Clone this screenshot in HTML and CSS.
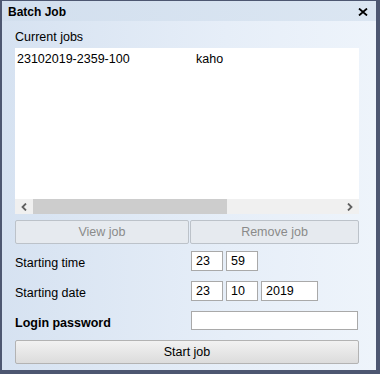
FILE: index.html
```html
<!DOCTYPE html>
<html lang="en">
<head>
    <meta charset="UTF-8">
    <title>Batch Job</title>
    <link rel="stylesheet" href="styles.css">
</head>
<body>
    <div class="window">
        <div class="title-bar">
            <span class="title">Batch Job</span>
            <svg class="close" width="10" height="8" viewBox="0 0 10 8">
                <path d="M1 0.5 L9 7.5 M9 0.5 L1 7.5" stroke="#000" stroke-width="1.8" fill="none"/>
            </svg>
        </div>

        <div class="content">
            <p class="section-label">Current jobs</p>

            <div class="job-list">
                <div class="rows">
                    <div class="row">
                        <span class="job-id">23102019-2359-100</span>
                        <span class="job-user">kaho</span>
                    </div>
                </div>
                <div class="scrollbar">
                    <svg class="arrow" width="6" height="8" viewBox="0 0 6 8">
                        <path d="M5 0.5 L1.5 4 L5 7.5" stroke="#606060" stroke-width="1.8" fill="none"/>
                    </svg>
                    <div class="track"><div class="thumb"></div></div>
                    <svg class="arrow" width="6" height="8" viewBox="0 0 6 8">
                        <path d="M1 0.5 L4.5 4 L1 7.5" stroke="#606060" stroke-width="1.8" fill="none"/>
                    </svg>
                </div>
            </div>

            <div class="job-buttons">
                <button class="btn btn-disabled view">View job</button>
                <button class="btn btn-disabled remove">Remove job</button>
            </div>

            <div class="form">
                <label class="form-label">Starting time</label>
                <div class="fields">
                    <input class="field small" type="text" value="23">
                    <input class="field small" type="text" value="59">
                </div>

                <label class="form-label">Starting date</label>
                <div class="fields">
                    <input class="field small" type="text" value="23">
                    <input class="field small" type="text" value="10">
                    <input class="field year" type="text" value="2019">
                </div>

                <label class="form-label bold">Login password</label>
                <div class="fields">
                    <input class="field password" type="password">
                </div>
            </div>

            <button class="btn btn-start">Start job</button>
        </div>
    </div>
</body>
</html>
```

FILE: styles.css
```css
/* General */
body {
    margin: 0;
    padding: 0;
    background: #4d5771;
    font-family: 'Liberation Sans', Arial, sans-serif;
    font-size: 12.5px;
    color: #000;
}

/* Window frame */
.window {
    margin: 1px 4px 0 2px;
    height: 369px;
    background: linear-gradient(to right, #d6e2f1, #e6eef8 60%, #eef4fb);
    display: flex;
    flex-direction: column;
}

/* Title bar */
.title-bar {
    height: 19px;
    display: flex;
    align-items: center;
    justify-content: space-between;
    padding: 1px 8px 0 6px;
    background: linear-gradient(to right, #d2dfee, #dbe6f2);
}

.title {
    font-weight: bold;
    font-size: 12px;
}

.close {
    display: block;
}

/* Content */
.content {
    padding: 0 17px 0 13px;
    display: flex;
    flex-direction: column;
}

.section-label {
    margin: 8px 0 0 0;
    height: 19px;
    line-height: 16px;
}

/* Job list */
.job-list {
    height: 166px;
    background: #fff;
    display: flex;
    flex-direction: column;
}

.rows {
    flex: 1;
    padding: 4px 2px;
}

.row {
    display: flex;
    line-height: 14px;
}

.job-id {
    width: 179px;
}

.scrollbar {
    height: 15px;
    background: #f0f0f0;
    display: flex;
    align-items: center;
}

.scrollbar .arrow {
    display: block;
    width: 6px;
    margin: 0 6px;
}

.track {
    flex: 1;
    height: 15px;
}

.thumb {
    width: 194px;
    height: 15px;
    background: #cdcdcd;
}

/* Buttons */
.job-buttons {
    margin-top: 6px;
    display: flex;
    gap: 1px;
}

.btn {
    font-family: inherit;
    font-size: 12.5px;
    height: 24px;
    border-radius: 2px;
    padding: 0;
}

.btn-disabled {
    background: #e6eaef;
    border: 1px solid #bcc2c9;
    color: #8a8a8a;
}

.view {
    width: 174px;
}

.remove {
    flex: 1;
}

/* Form */
.form {
    margin-top: 7px;
    display: grid;
    grid-template-columns: 176px 1fr;
    grid-auto-rows: 20px;
    row-gap: 10px;
}

.form-label {
    line-height: 24px;
}

.bold {
    font-weight: bold;
}

.fields {
    display: flex;
    gap: 3px;
}

.field {
    box-sizing: border-box;
    height: 20px;
    margin: 0;
    border: 1px solid #a9a9a9;
    background: #fff;
    font-family: inherit;
    font-size: 12.5px;
    padding: 0 4px;
    outline: none;
}

.small {
    width: 32px;
}

.year {
    width: 57px;
}

.password {
    width: 167px;
    height: 19px;
}

/* Start button */
.btn-start {
    margin-top: 9px;
    background: linear-gradient(to bottom, #f2f2f2, #dcdcdc);
    border: 1px solid #b3b3b3;
    color: #000;
}
```
